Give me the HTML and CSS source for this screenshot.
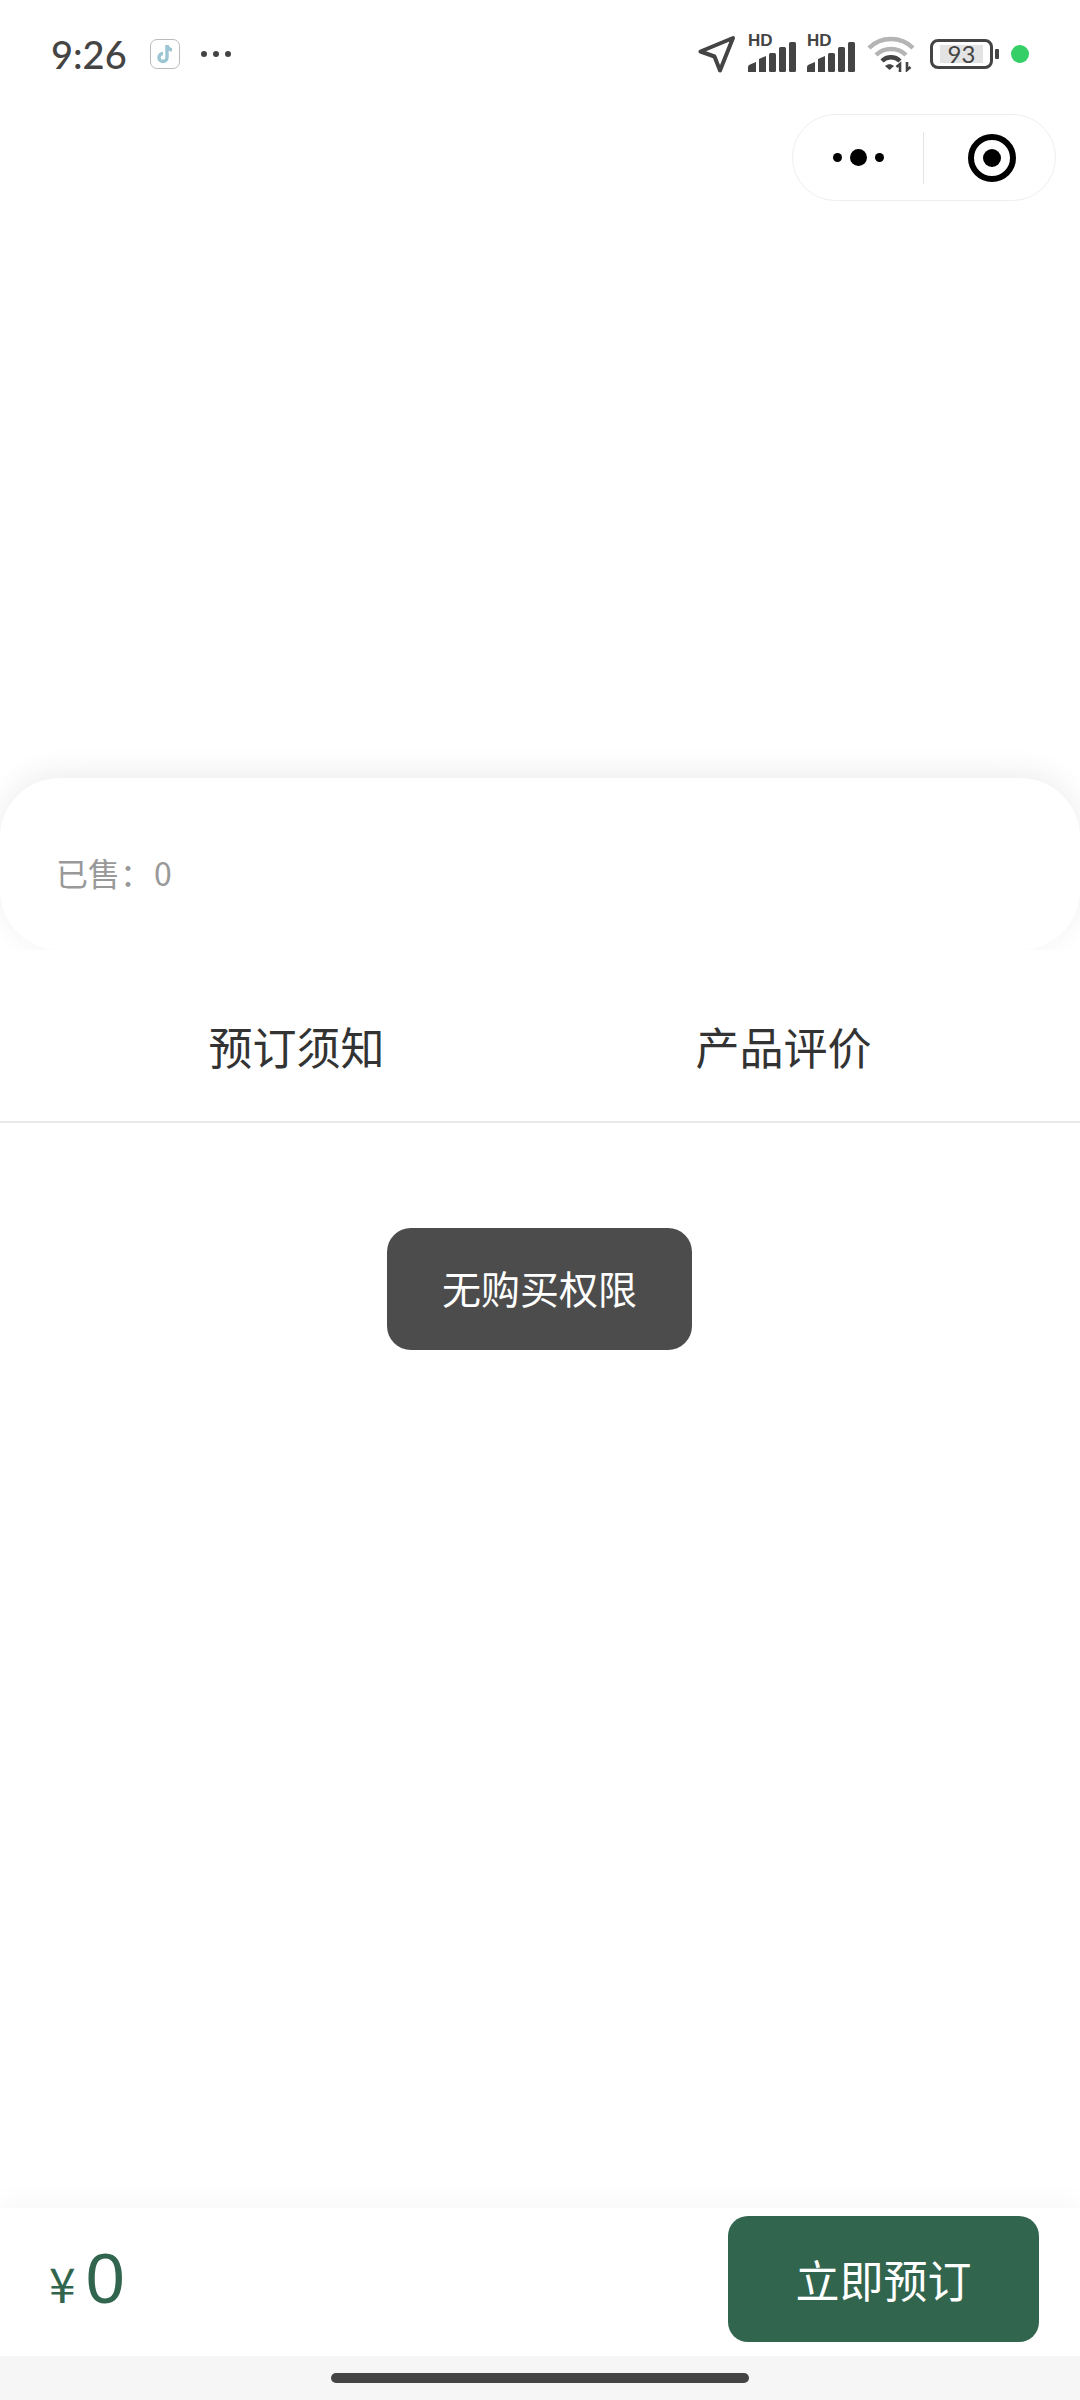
FILE: index.html
```html
<!DOCTYPE html>
<html lang="zh-CN">
<head>
    <meta charset="UTF-8">
    <title>产品详情</title>
    <link rel="stylesheet" href="styles.css">
</head>
<body>
    <div class="page">
        <div class="hero">
            <div class="status-bar">
                <div class="status-left">
                    <span class="clock">9:26</span>
                    <span class="app-badge">
                        <svg width="20" height="22" viewBox="0 0 20 22">
                            <path d="M12 2v12.5a4 4 0 1 1-4-4" fill="none" stroke="#9cc5d3" stroke-width="3.4"/>
                            <path d="M12 2.5c.5 2.6 2.4 4.2 5 4.6" fill="none" stroke="#9cc5d3" stroke-width="3.4"/>
                        </svg>
                    </span>
                    <span class="more-dots"><i></i><i></i><i></i></span>
                </div>
                <div class="status-right">
                    <svg class="nav-arrow" width="38" height="38" viewBox="0 0 38 38">
                        <path d="M2.500 16.500 35 3 22 35.500 16.500 21.500Z" fill="none" stroke="#444" stroke-width="4" stroke-linejoin="round"/>
                    </svg>
                    <div class="signal">
                        <span class="hd">HD</span>
                        <svg width="51" height="30" viewBox="0 0 51 30">
                            <path d="M0 30v-5q0-2 2-2.500l6-2.500v10zM11 30V17l7-3v16z" fill="#444"/>
                            <rect x="21" y="11" width="7" height="19" rx="1.500" fill="#444"/>
                            <rect x="31" y="5" width="7" height="25" rx="1.500" fill="#444"/>
                            <rect x="41" y="0" width="7" height="30" rx="1.500" fill="#444"/>
                        </svg>
                    </div>
                    <div class="signal">
                        <span class="hd">HD</span>
                        <svg width="51" height="30" viewBox="0 0 51 30">
                            <path d="M0 30v-5q0-2 2-2.500l6-2.500v10zM11 30V17l7-3v16z" fill="#444"/>
                            <rect x="21" y="11" width="7" height="19" rx="1.500" fill="#444"/>
                            <rect x="31" y="5" width="7" height="25" rx="1.500" fill="#444"/>
                            <rect x="41" y="0" width="7" height="30" rx="1.500" fill="#444"/>
                        </svg>
                    </div>
                    <svg class="wifi" width="48" height="36" viewBox="0 0 48 36">
                        <path d="M2 12C14 0 34 0 46 12" fill="none" stroke="#b4b4b4" stroke-width="4.500"/>
                        <path d="M9 19C17 11 31 11 39 19" fill="none" stroke="#b4b4b4" stroke-width="4.500"/>
                        <path d="M15 25C20 20 28 20 33 25" fill="none" stroke="#444" stroke-width="4.500"/>
                        <path d="M18 30c3-2.500 6-2.500 9 0l-4.500 4z" fill="#444"/>
                        <path d="M33 36v-8l-3.500 3M40 26v8l3.500-3" fill="none" stroke="#444" stroke-width="2.600"/>
                    </svg>
                    <div class="battery">
                        <div class="battery-body"><span class="battery-level">93</span></div>
                        <span class="battery-nub"></span>
                    </div>
                    <span class="green-dot"></span>
                </div>
            </div>
            <div class="capsule">
                <span class="capsule-dots"><i></i><b></b><i></i></span>
                <span class="capsule-line"></span>
                <span class="capsule-target"><i></i></span>
            </div>
        </div>

        <div class="sold-card">已售：<span class="sold-num">0</span></div>

        <div class="tabs">
            <div class="tab">预订须知</div>
            <div class="tab">产品评价</div>
        </div>

        <div class="content">
            <div class="toast">无购买权限</div>
        </div>

        <div class="footer">
            <div class="price"><span class="yen">¥</span><span class="amount">0</span></div>
            <button class="book-btn">立即预订</button>
        </div>
        <div class="home-strip"><span class="home-bar"></span></div>
    </div>
</body>
</html>
```

FILE: styles.css
```css
* {
    box-sizing: border-box;
}

body {
    margin: 0;
    background: #fff;
    font-family: "Noto Sans CJK SC", "Liberation Sans", sans-serif;
}

.page {
    position: relative;
    height: 2400px;
    display: flex;
    flex-direction: column;
    overflow: hidden;
}

.hero {
    height: 778px;
    flex-shrink: 0;
}

.status-bar {
    height: 108px;
    padding: 0 51px;
    display: flex;
    justify-content: space-between;
    align-items: center;
}

.status-left,
.status-right {
    display: flex;
    align-items: center;
}

.clock {
    width: 99px;
    font-family: Lato, sans-serif;
    font-size: 38px;
    font-weight: 500;
    color: #444;
}

.app-badge {
    width: 30px;
    height: 30px;
    border: 1px solid #bbb;
    border-radius: 7px;
    display: flex;
    justify-content: center;
    align-items: center;
}

.more-dots {
    margin-left: 21px;
    display: flex;
    gap: 6px;
}

.more-dots i {
    width: 6px;
    height: 6px;
    border-radius: 50%;
    background: #444;
}

.nav-arrow {
    margin-right: 12px;
}

.signal {
    position: relative;
    width: 51px;
    height: 36px;
    margin-right: 8px;
    display: flex;
    align-items: flex-end;
}

.hd {
    position: absolute;
    left: 0;
    top: -4px;
    font-family: "Liberation Sans", sans-serif;
    font-size: 17px;
    font-weight: 700;
    line-height: 17px;
    color: #444;
}

.wifi {
    margin: 0 15px 0 1px;
}

.battery {
    display: flex;
    align-items: center;
}

.battery-body {
    width: 63px;
    height: 30px;
    padding: 3px 7px;
    border: 3px solid #444;
    border-radius: 8px;
}

.battery-level {
    display: block;
    height: 18px;
    background: #e3e3e3;
    font-family: Lato, sans-serif;
    font-size: 24px;
    line-height: 18px;
    text-align: center;
    color: #444;
}

.battery-nub {
    width: 4px;
    height: 10px;
    margin-left: 2px;
    border-radius: 1px;
    background: #444;
}

.green-dot {
    width: 18px;
    height: 18px;
    margin-left: 12px;
    border-radius: 50%;
    background: #34cf67;
}

.capsule {
    position: absolute;
    top: 114px;
    left: 792px;
    width: 264px;
    height: 87px;
    border: 1px solid #eee;
    border-radius: 44px;
    background: #fff;
    display: flex;
    align-items: center;
}

.capsule-dots {
    width: 130px;
    display: flex;
    justify-content: center;
    align-items: center;
    gap: 8px;
}

.capsule-dots i {
    width: 9px;
    height: 9px;
    border-radius: 50%;
    background: #000;
}

.capsule-dots b {
    width: 17px;
    height: 17px;
    border-radius: 50%;
    background: #000;
}

.capsule-line {
    width: 1px;
    height: 52px;
    background: #e5e5e5;
}

.capsule-target {
    width: 48px;
    height: 48px;
    margin-left: 44px;
    border: 6px solid #000;
    border-radius: 50%;
    display: flex;
    justify-content: center;
    align-items: center;
}

.capsule-target i {
    width: 18px;
    height: 18px;
    border-radius: 50%;
    background: #000;
}

.sold-card {
    position: relative;
    height: 172px;
    flex-shrink: 0;
    padding: 16px 0 0 56px;
    border-radius: 60px;
    background: #fff;
    box-shadow: 0 -6px 30px rgba(0, 0, 0, 0.07);
    display: flex;
    align-items: center;
    font-size: 32px;
    color: #999;
}

.sold-num {
    margin-left: 2px;
}

.tabs {
    position: relative;
    height: 173px;
    flex-shrink: 0;
    padding: 20px 53px 0;
    background: #fff;
    border-bottom: 2px solid #e8e8e8;
    display: grid;
    grid-template-columns: 1fr 1fr;
    align-items: center;
    text-align: center;
    font-size: 44px;
    color: #333;
}

.content {
    flex: 1;
}

.toast {
    position: absolute;
    top: 1228px;
    left: 387px;
    width: 305px;
    height: 122px;
    padding-bottom: 5px;
    border-radius: 24px;
    background: #4c4c4c;
    display: flex;
    justify-content: center;
    align-items: center;
    font-size: 39px;
    color: #fff;
}

.footer {
    height: 148px;
    flex-shrink: 0;
    padding: 8px 41px 14px 49px;
    background: #fff;
    box-shadow: 0 -8px 24px rgba(0, 0, 0, 0.03);
    display: flex;
    justify-content: space-between;
    align-items: center;
}

.price {
    display: flex;
    align-items: baseline;
    color: #31654e;
    font-family: "Liberation Sans", sans-serif;
}

.yen {
    margin-right: 10px;
    font-family: "Noto Sans CJK SC", sans-serif;
    font-size: 48px;
}

.amount {
    font-size: 70px;
}

.book-btn {
    width: 311px;
    height: 126px;
    padding: 0;
    border: none;
    border-radius: 20px;
    background: #31654e;
    font-family: inherit;
    font-size: 44px;
    color: #fff;
}

.home-strip {
    height: 44px;
    flex-shrink: 0;
    background: #f6f6f6;
    display: flex;
    justify-content: center;
    align-items: center;
}

.home-bar {
    width: 418px;
    height: 10px;
    border-radius: 5px;
    background: #444;
}
```
